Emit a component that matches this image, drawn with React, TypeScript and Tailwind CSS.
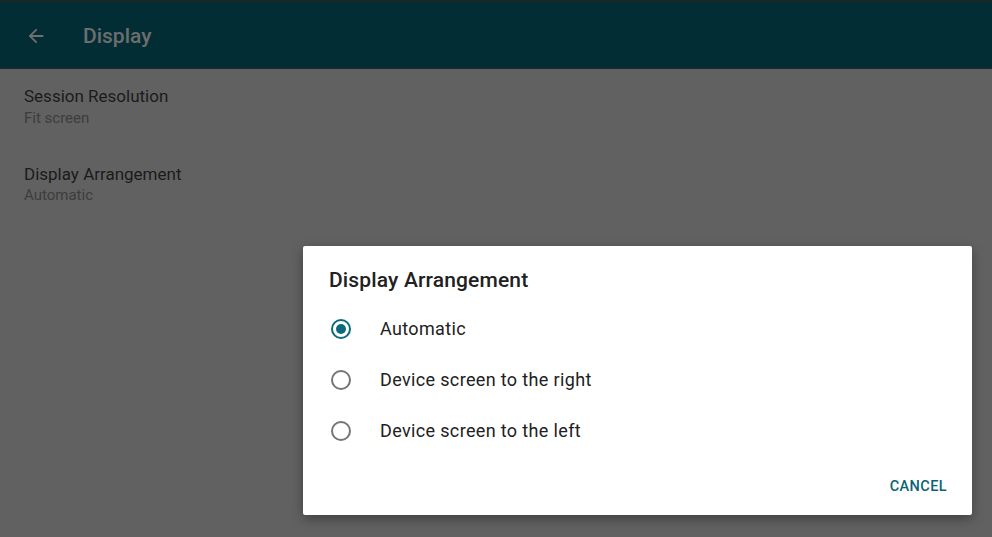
import React from "react";

const options = ["Automatic", "Device screen to the right", "Device screen to the left"];

export default function App() {
    return (
        <div className="relative w-[992px] h-[537px] overflow-hidden bg-[#616161] font-['Roboto',sans-serif]">
            {/* Toolbar */}
            <div className="h-[2px] bg-[#1c2628]" />
            <div className="h-[67px] bg-[#032d35] flex items-center border-b border-[#1e2a2c]">
                <svg className="ml-[25px] mt-[2px] w-[22px] h-[22px]" viewBox="0 0 24 24" fill="#6f6f6f">
                    <path d="M20 11H7.83l5.59-5.59L12 4l-8 8 8 8 1.41-1.41L7.83 13H20v-2z" />
                </svg>
                <span className="ml-[36px] mt-[3px] text-[21px] font-medium text-[#6d6d6d]">Display</span>
            </div>

            {/* Preference list */}
            <div className="pl-6">
                <div className="pt-[16px] pb-[18px]">
                    <div className="text-[17px] leading-[22px] text-[#1b1b1b]">Session Resolution</div>
                    <div className="text-[15px] leading-[22px] text-[#3d3d3d]">Fit screen</div>
                </div>
                <div className="pt-[16px]">
                    <div className="text-[17px] leading-[22px] text-[#1b1b1b]">Display Arrangement</div>
                    <div className="text-[15px] leading-[20px] text-[#3d3d3d]">Automatic</div>
                </div>
            </div>

            {/* Dialog */}
            <div className="absolute left-[303px] top-[246px] w-[669px] h-[269px] bg-white rounded-[2px] shadow-[0_4px_12px_rgba(0,0,0,0.35)]">
                <div className="pl-[26px] pt-[20px] text-[21px] leading-[28px] font-medium tracking-[0.15px] text-[#212121]">Display Arrangement</div>
                <div className="mt-[9px]">
                    {options.map((opt, i) => (
                        <div key={opt} className="h-[51px] flex items-center pl-[28px]">
                            <div
                                className={
                                    "w-5 h-5 rounded-full border-2 flex items-center justify-center " +
                                    (i === 0 ? "border-[#0b6b7a]" : "border-[#757575]")
                                }
                            >
                                {i === 0 && <div className="w-[10px] h-[10px] rounded-full bg-[#0b6b7a]" />}
                            </div>
                            <span className="ml-[29px] text-[18px] tracking-[0.35px] text-[#212121]">{opt}</span>
                        </div>
                    ))}
                </div>
                <div className="absolute right-[25px] bottom-[17px] text-[14.5px] font-medium text-[#0b6473] tracking-[0.4px]">CANCEL</div>
            </div>
        </div>
    );
}
